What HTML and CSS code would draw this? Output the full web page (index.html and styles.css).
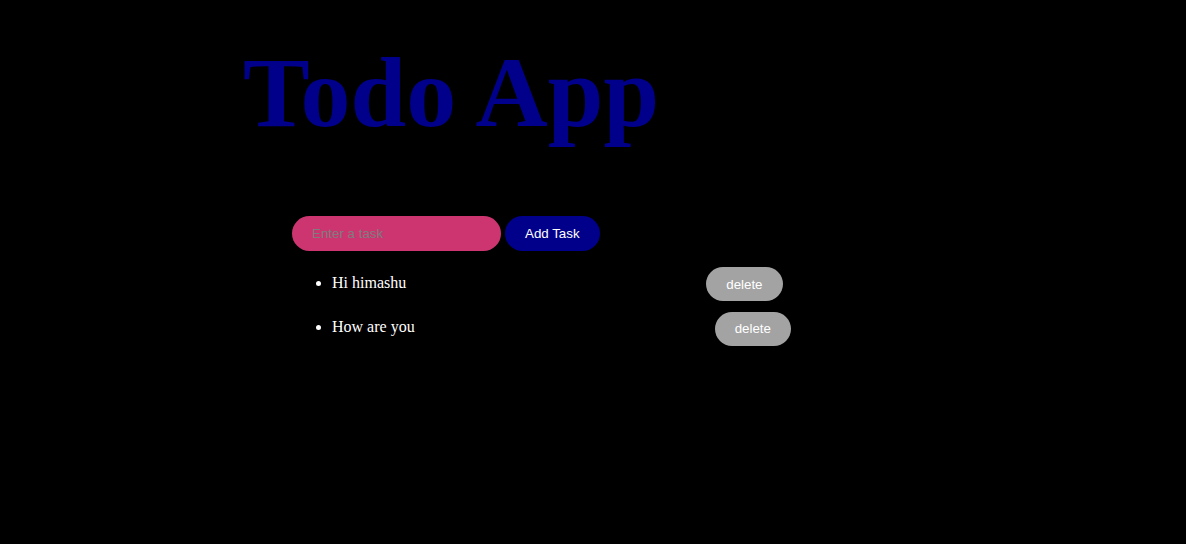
FILE: index.html
```html
<!DOCTYPE html>
<html lang="en">
<head>
<meta charset="utf-8">
<title>Todo App</title>
<link rel="stylesheet" href="styles.css">
</head>
<body>
  <div class="app">
    <h1 class="title">Todo App</h1>
    <div class="todo">
      <form class="add-form">
        <input class="task-input" type="text" placeholder="Enter a task"><button class="add-btn" type="button">Add Task</button>
      </form>
      <ul class="task-list">
        <li class="task-item">Hi himashu <button class="delete-btn" type="button">delete</button></li>
        <li class="task-item">How are you <button class="delete-btn" type="button">delete</button></li>
      </ul>
    </div>
  </div>
</body>
</html>
```
FILE: styles.css
```css
html, body {
  margin: 0;
  padding: 0;
  background: #000;
}
body {
  font-family: "Liberation Serif", "Times New Roman", serif;
  color: #fff;
}
.app {
  padding-top: 1px;
}
.title {
  margin: 34px 0 0 243px;
  font-family: "Liberation Serif", "Times New Roman", serif;
  font-weight: bold;
  font-size: 100px;
  line-height: 115px;
  color: #00008b;
}
.todo {
  padding-left: 292px;
  margin-top: 66px;
}
.add-form {
  margin: 0;
  display: flex;
  gap: 4px;
  align-items: center;
}
.task-input {
  box-sizing: border-box;
  width: 209px;
  height: 35px;
  padding: 0 20px;
  border: none;
  border-radius: 18px;
  background: #cd3571;
  color: #fff;
  font-family: "Liberation Sans", Arial, sans-serif;
  font-size: 13.33px;
  outline: none;
}
.task-input::placeholder {
  color: #7d7d7d;
}
.add-btn {
  box-sizing: border-box;
  height: 35px;
  padding: 0 20px;
  border: none;
  border-radius: 18px;
  background: #00008b;
  color: #fff;
  font-family: "Liberation Sans", Arial, sans-serif;
  font-size: 13.33px;
}
.task-list {
  margin: 15px 0 0;
  padding-left: 40px;
}
.task-item {
  font-size: 16px;
  line-height: 34px;
  margin-bottom: 9px;
}
.delete-btn {
  box-sizing: border-box;
  height: 34px;
  margin-left: 296px;
  padding: 0 20px;
  border: none;
  border-radius: 17px;
  background: #a3a3a3;
  color: #fff;
  font-family: "Liberation Sans", Arial, sans-serif;
  font-size: 13.33px;
  vertical-align: middle;
}
```
